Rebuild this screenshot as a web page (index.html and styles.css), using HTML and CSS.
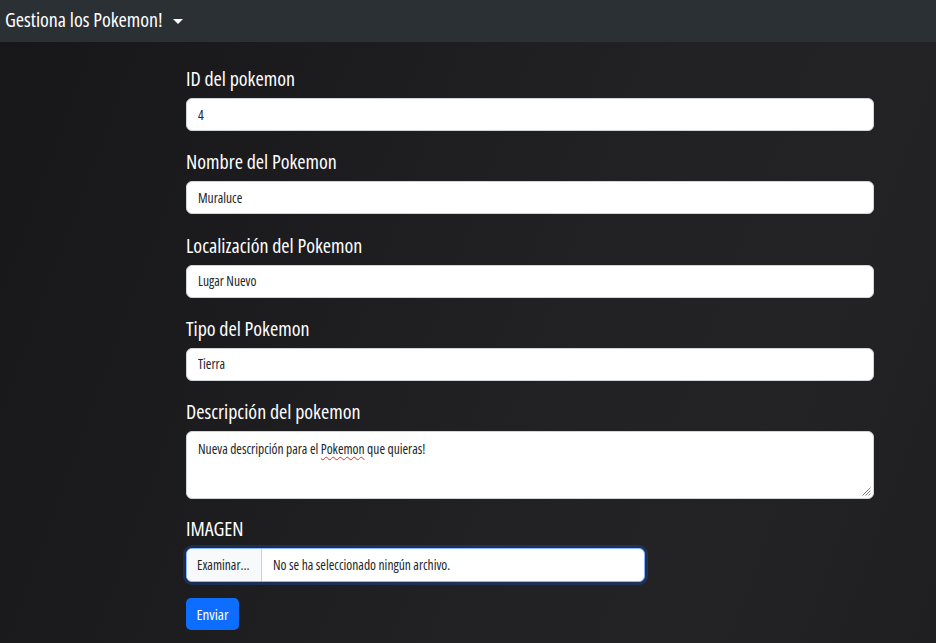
FILE: index.html
```html
<!DOCTYPE html>
<html lang="es">
<head>
<meta charset="utf-8">
<title>Gestiona los Pokemon!</title>
<link rel="stylesheet" href="styles.css">
</head>
<body>
<nav class="navbar">
  <span class="brand">Gestiona los Pokemon!</span>
  <span class="caret"></span>
</nav>
<main class="page">
  <form class="form">
    <div class="field">
      <label class="label">ID del pokemon</label>
      <input class="input" type="text" value="4">
    </div>
    <div class="field">
      <label class="label">Nombre del Pokemon</label>
      <input class="input" type="text" value="Muraluce">
    </div>
    <div class="field">
      <label class="label">Localización del Pokemon</label>
      <input class="input" type="text" value="Lugar Nuevo">
    </div>
    <div class="field">
      <label class="label">Tipo del Pokemon</label>
      <input class="input" type="text" value="Tierra">
    </div>
    <div class="field field-area">
      <label class="label">Descripción del pokemon</label>
      <div class="textarea">
        <span>Nueva descripción para el <span class="misspelled">Pokemon</span> que quieras!</span>
        <svg class="grip" width="10" height="10" viewBox="0 0 10 10"><path d="M9.5 1.5L1.5 9.5M9.5 4.5L4.5 9.5M9.5 7.5L7.5 9.5" stroke="#7a7a7a" stroke-width="1"/></svg>
      </div>
    </div>
    <div class="field field-file">
      <label class="label">IMAGEN</label>
      <div class="file">
        <span class="file-btn">Examinar...</span>
        <span class="file-name">No se ha seleccionado ningún archivo.</span>
      </div>
    </div>
    <div class="actions">
      <span class="btn">Enviar</span>
    </div>
  </form>
</main>
</body>
</html>
```
FILE: styles.css
```css
* { box-sizing: border-box; }
html, body { margin: 0; padding: 0; }
body {
  width: 936px;
  height: 643px;
  overflow: hidden;
  font-family: "Open Sans", "Roboto", sans-serif;
  font-stretch: 75%;
  background: linear-gradient(110deg, #17171a 0%, #1c1c1f 30%, #222225 60%, #232326 80%, #1f1f22 100%);
  color: #fff;
}
.navbar {
  height: 42px;
  background: #2b3035;
  display: flex;
  align-items: center;
  padding-left: 5px;
  gap: 10px;
}
.brand {
  font-size: 20px;
  font-weight: 500;
  color: #fff;
  line-height: 24px;
  margin-top: -2px;
}
.caret {
  width: 0; height: 0;
  border-left: 5px solid transparent;
  border-right: 5px solid transparent;
  border-top: 5px solid #fff;
}
.page {
  padding-left: 186px;
  padding-top: 25px;
}
.form {
  width: 688px;
  display: flex;
  flex-direction: column;
}
.field {
  display: flex;
  flex-direction: column;
  margin-bottom: 19.25px;
}
.field-area { margin-bottom: 18px; }
.field-file { margin-bottom: 16px; }
.label {
  font-size: 20px;
  font-weight: 500;
  line-height: 24px;
  margin-bottom: 7px;
  color: #fff;
}
.input {
  height: 33px;
  border: 1px solid #ced4da;
  border-radius: 6px;
  background: #fff;
  padding: 0 11px;
  font-family: inherit;
  font-stretch: 75%;
  font-size: 13.5px;
  font-weight: 500;
  color: #212529;
  outline: none;
}
.textarea {
  position: relative;
  height: 68px;
  border: 1px solid #ced4da;
  border-radius: 6px;
  background: #fff;
  padding: 7px 11px;
  font-size: 13.5px;
  font-weight: 500;
  line-height: 20px;
  color: #212529;
}
.misspelled {
  text-decoration: underline wavy #e0301e;
  text-decoration-thickness: 1px;
  text-underline-offset: 2px;
}
.grip {
  position: absolute;
  right: 2px;
  bottom: 2px;
}
.file {
  width: 459px;
  height: 34px;
  display: flex;
  border: 1px solid #86b7fe;
  border-radius: 6px;
  background: #fff;
  box-shadow: 0 0 0 3px rgba(13,110,253,0.22);
  overflow: hidden;
  font-size: 13.5px;
  font-weight: 500;
  color: #212529;
}
.file-btn {
  display: flex;
  align-items: center;
  padding: 0 10px;
  background: #f8f9fa;
  border-right: 1px solid #b6d4fe;
  width: 75px;
  flex: none;
}
.file-name {
  display: flex;
  align-items: center;
  padding-left: 11px;
}
.actions {
  display: flex;
}
.btn {
  display: flex;
  align-items: center;
  justify-content: center;
  width: 53px;
  height: 32px;
  background: #0d6efd;
  color: #fff;
  border-radius: 5px;
  font-size: 15px;
  font-weight: 500;
}
```
